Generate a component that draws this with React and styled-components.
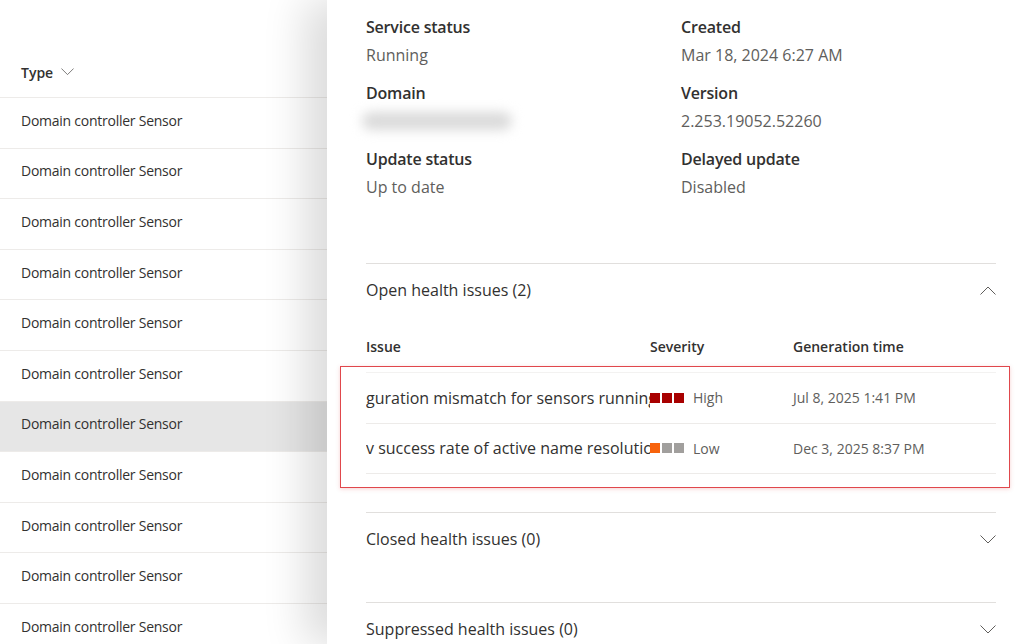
import styled, { createGlobalStyle } from "styled-components";

const GlobalStyle = createGlobalStyle`
  html, body {
    margin: 0;
    padding: 0;
    background: #ffffff;
  }
  body {
    font-family: "Open Sans", "Noto Sans", sans-serif;
    color: #323130;
  }
`;

const Page = styled.div`
  display: flex;
  width: 1024px;
  height: 644px;
  overflow: hidden;
  background: #ffffff;
`;

const ListPane = styled.div`
  width: 327px;
  flex-shrink: 0;
  padding-top: 47px;
  box-sizing: border-box;
`;

const ListHeader = styled.div`
  display: flex;
  align-items: center;
  gap: 8px;
  height: 51px;
  padding-left: 21px;
  box-sizing: border-box;
  border-bottom: 1px solid #edebe9;
  font-size: 14px;
  font-weight: 600;
  color: #323130;
`;

const ListRow = styled.div`
  display: flex;
  align-items: center;
  height: 50.6px;
  padding: 0 0 5px 21px;
  box-sizing: border-box;
  border-bottom: 1px solid #edebe9;
  font-size: 14px;
  letter-spacing: -0.25px;
  color: #323130;
  background: ${(p) => (p.$selected ? "#e6e6e6" : "#ffffff")};
`;

const Panel = styled.div`
  flex: 1;
  padding: 13px 28px 0 39px;
  box-sizing: border-box;
  background: #ffffff;
  box-shadow: -22px 0 40px rgba(0, 0, 0, 0.14);
  position: relative;
  z-index: 1;
`;

const DetailsGrid = styled.div`
  display: grid;
  grid-template-columns: 315px 1fr;
  row-gap: 10px;
`;

const Field = styled.div`
  display: flex;
  flex-direction: column;
`;

const Label = styled.div`
  font-size: 16px;
  line-height: 28px;
  font-weight: 600;
  letter-spacing: -0.2px;
  color: #323130;
`;

const Value = styled.div`
  font-size: 16px;
  line-height: 28px;
  color: #605e5c;
  height: 28px;
  display: flex;
  align-items: center;
`;

const Blurred = styled.div`
  width: 150px;
  height: 18px;
  margin-left: -4px;
  background: #dadada;
  border-radius: 9px;
  filter: blur(6px);
`;

const Section = styled.div`
  border-top: 1px solid #e1dfdd;
  margin-top: ${(p) => p.$top || 0}px;
`;

const SectionHeader = styled.div`
  display: flex;
  align-items: center;
  justify-content: space-between;
  height: 52px;
  padding-bottom: 1px;
  font-size: 16px;
  color: #323130;
`;

const SectionBody = styled.div`
  min-height: ${(p) => p.$min || 0}px;
`;

const TableHeader = styled.div`
  display: grid;
  grid-template-columns: 284px 143px 1fr;
  align-items: center;
  height: 48px;
  margin-top: 5px;
  font-size: 14px;
  font-weight: 600;
  color: #323130;
`;

const Rows = styled.div`
  position: relative;
  border-top: 1px solid #f3f2f1;
  margin-top: 2px;

  &::after {
    content: "";
    position: absolute;
    left: -26px;
    right: -14px;
    top: -7px;
    bottom: -14px;
    border: 1.5px solid #e0474c;
    box-shadow: 0 1px 4px rgba(224, 71, 76, 0.25);
    pointer-events: none;
  }
`;

const Row = styled.div`
  display: grid;
  grid-template-columns: 284px 143px 1fr;
  align-items: center;
  height: 50.5px;
  border-bottom: 1px solid #edebe9;
  box-sizing: border-box;
`;

const IssueCell = styled.div`
  font-size: 16px;
  color: #323130;
  white-space: nowrap;
  overflow: hidden;
  padding-right: 2px;
`;

const SeverityCell = styled.div`
  display: flex;
  align-items: center;
  font-size: 14px;
  color: #605e5c;
`;

const Squares = styled.div`
  display: flex;
  gap: 2px;
  margin-right: 9px;
`;

const Square = styled.span`
  width: 10px;
  height: 10px;
  background: ${(p) => p.$color};
`;

const DateCell = styled.div`
  font-size: 14px;
  color: #605e5c;
`;

const Chevron = ({ up, size = 16 }) => (
  <svg width={size} height={size / 2 + 1} viewBox="0 0 16 9" fill="none">
    <polyline
      points={up ? "0.5,8.5 8,1 15.5,8.5" : "0.5,0.5 8,8 15.5,0.5"}
      stroke="#605e5c"
      strokeWidth="1"
    />
  </svg>
);

const sensors = Array.from({ length: 11 }, (_, i) => i);

const details = [
  ["Service status", "Running", "Created", "Mar 18, 2024 6:27 AM"],
  ["Domain", null, "Version", "2.253.19052.52260"],
  ["Update status", "Up to date", "Delayed update", "Disabled"],
];

const issues = [
  {
    text: "guration mismatch for sensors running on VMware",
    colors: ["#a80000", "#a80000", "#a80000"],
    level: "High",
    time: "Jul 8, 2025 1:41 PM",
  },
  {
    text: "v success rate of active name resolution",
    colors: ["#f7630c", "#a19f9d", "#a19f9d"],
    level: "Low",
    time: "Dec 3, 2025 8:37 PM",
  },
];

const App = () => {
  return (
    <Page>
      <GlobalStyle />
      <ListPane>
        <ListHeader>
          Type
          <Chevron size={13} />
        </ListHeader>
        {sensors.map((i) => (
          <ListRow key={i} $selected={i === 6}>
            Domain controller Sensor
          </ListRow>
        ))}
      </ListPane>
      <Panel>
        <DetailsGrid>
          {details.map(([l1, v1, l2, v2]) => [
            <Field key={l1}>
              <Label>{l1}</Label>
              <Value>{v1 === null ? <Blurred /> : v1}</Value>
            </Field>,
            <Field key={l2}>
              <Label>{l2}</Label>
              <Value>{v2}</Value>
            </Field>,
          ])}
        </DetailsGrid>
        <Section $top={62}>
          <SectionHeader>
            Open health issues (2)
            <Chevron up />
          </SectionHeader>
          <TableHeader>
            <div>Issue</div>
            <div>Severity</div>
            <div>Generation time</div>
          </TableHeader>
          <Rows>
            {issues.map((it) => (
              <Row key={it.time}>
                <IssueCell>{it.text}</IssueCell>
                <SeverityCell>
                  <Squares>
                    {it.colors.map((c, i) => (
                      <Square key={i} $color={c} />
                    ))}
                  </Squares>
                  {it.level}
                </SeverityCell>
                <DateCell>{it.time}</DateCell>
              </Row>
            ))}
          </Rows>
          <SectionBody $min={38} />
        </Section>
        <Section>
          <SectionHeader>
            Closed health issues (0)
            <Chevron />
          </SectionHeader>
          <SectionBody $min={36} />
        </Section>
        <Section>
          <SectionHeader>
            Suppressed health issues (0)
            <Chevron />
          </SectionHeader>
        </Section>
      </Panel>
    </Page>
  );
};

export default App;
